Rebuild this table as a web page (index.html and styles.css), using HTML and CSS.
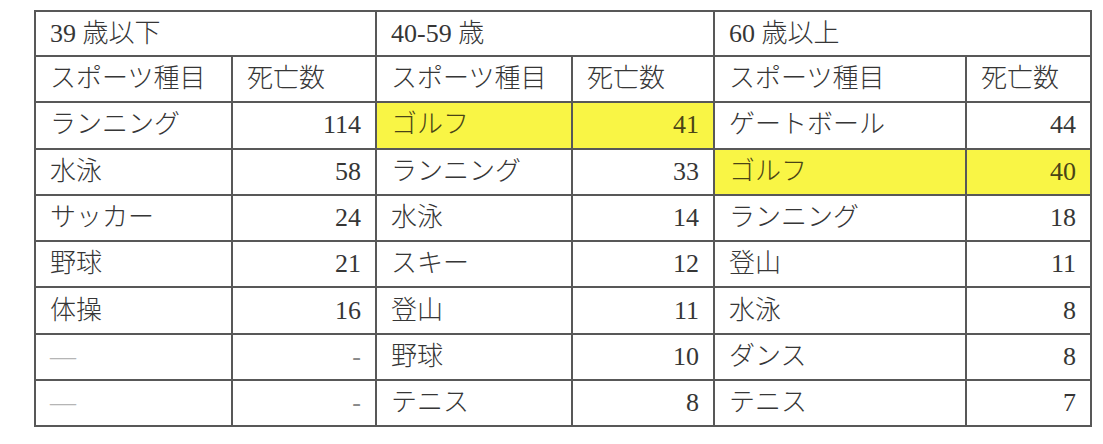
FILE: index.html
```html
<!DOCTYPE html>
<html lang="ja">
<head>
<meta charset="utf-8">
<link rel="stylesheet" href="styles.css">
</head>
<body>
<div class="wrap">
<table class="stats">
  <colgroup>
    <col class="c1"><col class="c2"><col class="c3"><col class="c4"><col class="c5"><col class="c6">
  </colgroup>
  <tr class="r-group">
    <td colspan="2">39 歳以下</td>
    <td colspan="2">40-59 歳</td>
    <td colspan="2">60 歳以上</td>
  </tr>
  <tr class="r-head">
    <td>スポーツ種目</td><td>死亡数</td>
    <td>スポーツ種目</td><td>死亡数</td>
    <td>スポーツ種目</td><td>死亡数</td>
  </tr>
  <tr>
    <td>ランニング</td><td class="num">114</td>
    <td class="hl">ゴルフ</td><td class="num hl">41</td>
    <td>ゲートボール</td><td class="num">44</td>
  </tr>
  <tr>
    <td>水泳</td><td class="num">58</td>
    <td>ランニング</td><td class="num">33</td>
    <td class="hl">ゴルフ</td><td class="num hl">40</td>
  </tr>
  <tr>
    <td>サッカー</td><td class="num">24</td>
    <td>水泳</td><td class="num">14</td>
    <td>ランニング</td><td class="num">18</td>
  </tr>
  <tr>
    <td>野球</td><td class="num">21</td>
    <td>スキー</td><td class="num">12</td>
    <td>登山</td><td class="num">11</td>
  </tr>
  <tr>
    <td>体操</td><td class="num">16</td>
    <td>登山</td><td class="num">11</td>
    <td>水泳</td><td class="num">8</td>
  </tr>
  <tr>
    <td class="empty">―</td><td class="num empty">-</td>
    <td>野球</td><td class="num">10</td>
    <td>ダンス</td><td class="num">8</td>
  </tr>
  <tr>
    <td class="empty">―</td><td class="num empty">-</td>
    <td>テニス</td><td class="num">8</td>
    <td>テニス</td><td class="num">7</td>
  </tr>
</table>
</div>
</body>
</html>
```

FILE: styles.css
```css
html, body {
  margin: 0;
  padding: 0;
  background: #ffffff;
}

.wrap {
  padding: 10px 0 0 34px;
}

.stats {
  border-collapse: collapse;
  table-layout: fixed;
  width: 1056px;
  font-family: "Liberation Serif", "Noto Sans CJK JP", serif;
  font-size: 26px;
  font-weight: 300;
  color: #363636;
}

.c1 { width: 197px; }
.c2 { width: 144px; }
.c3 { width: 196px; }
.c4 { width: 142px; }
.c5 { width: 252px; }
.c6 { width: 125px; }

.stats td {
  border: 2px solid #585858;
  height: 46.3px;
  padding: 0 14px 0 14px;
  box-sizing: border-box;
  vertical-align: middle;
  white-space: nowrap;
  line-height: 1;
}

.stats .r-group td {
  height: 45px;
}

.stats td.num {
  text-align: right;
}

.stats td.hl {
  background: #f9f545;
  color: #4a4416;
}

.stats td.empty {
  color: #b5b5b5;
}

.stats td.num.empty {
  color: #8a8a8a;
}
```
